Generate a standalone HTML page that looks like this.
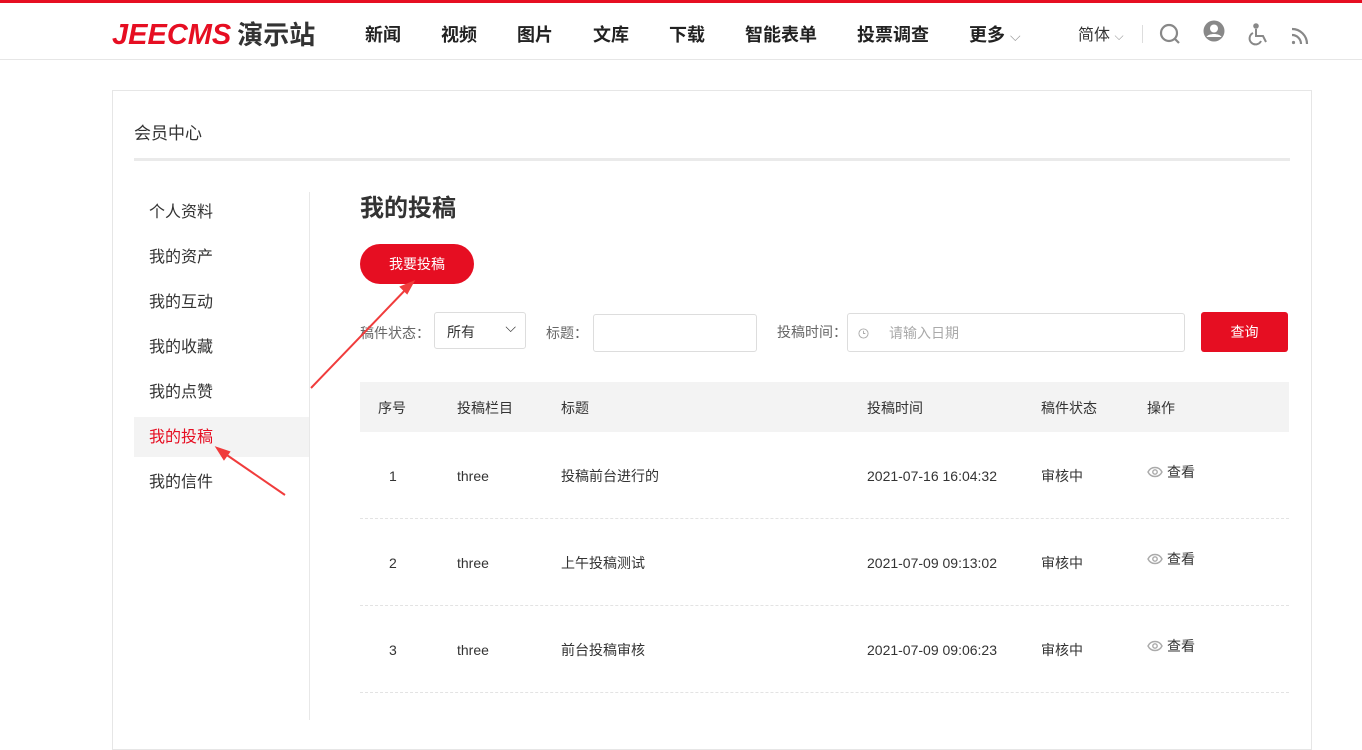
<!DOCTYPE html>
<html><head><meta charset="utf-8"><style>
*{margin:0;padding:0;box-sizing:border-box}
body{width:1362px;height:720px;overflow:hidden;background:#fff;font-family:"Liberation Sans","Noto Sans CJK SC",sans-serif;color:#333;position:relative}
.top{position:absolute;left:0;top:0;width:1362px;height:60px;background:#fff;border-top:3px solid #e60e22;border-bottom:1px solid #e6e6e6}
.logo{position:absolute;left:112px;top:12px;font-size:29px;font-weight:bold;font-style:italic;color:#e60e22;letter-spacing:0px}
.logo span{font-style:normal;color:#333;font-size:26px;margin-left:6px;letter-spacing:0}
.nav{position:absolute;top:18px;font-size:18px;font-weight:bold;color:#222}
.ic{position:absolute;top:19px}
.card{position:absolute;left:112px;top:90px;width:1200px;height:660px;background:#fff;border:1px solid #e6e6e6}
.abs{position:absolute}
.side div{position:absolute;left:0;width:175px;height:40px;line-height:42px;padding-left:15px;font-size:16px;color:#333}
.f{font-size:14px;color:#666}
.box{position:absolute;border:1px solid #ddd;border-radius:3px;background:#fff}
.th{position:absolute;font-size:14px;color:#333}
.td{position:absolute;font-size:14px;color:#333}
.row{position:absolute;left:360px;width:929px;border-bottom:1px dashed #e3e3e3}
.eye{display:inline-block;vertical-align:-2px;margin-right:4px}
</style></head><body>
<div class="top">
<div class="logo">JEECMS<span>演示站</span></div>
<div class="nav" style="left:365px">新闻</div>
<div class="nav" style="left:441px">视频</div>
<div class="nav" style="left:517px">图片</div>
<div class="nav" style="left:593px">文库</div>
<div class="nav" style="left:669px">下载</div>
<div class="nav" style="left:745px">智能表单</div>
<div class="nav" style="left:857px">投票调查</div>
<div class="nav" style="left:969px">更多 <span style="font-weight:normal;color:#999;font-size:14px">⌵</span></div>
<div class="abs" style="left:1078px;top:18px;font-size:16px;color:#333">简体 <span style="color:#999;font-size:12px">⌵</span></div>
<div class="abs" style="left:1142px;top:22px;width:1px;height:18px;background:#ddd"></div>
<svg class="ic" style="left:1158px" width="24" height="24" viewBox="0 0 24 24" fill="none" stroke="#888" stroke-width="2.2"><circle cx="11" cy="11" r="8"/><path d="M17 17l4 4"/></svg>
<svg class="ic" style="left:1203px;top:17px" width="22" height="22" viewBox="0 0 22 22"><circle cx="11" cy="11" r="10.5" fill="#888"/><circle cx="11" cy="8.5" r="4" fill="#fff"/><path d="M3.5 17c2-4 13-4 15 0" fill="#fff"/></svg>
<svg class="ic" style="left:1248px;top:20px" width="22" height="24" viewBox="0 0 22 24" fill="none" stroke="#888" stroke-width="2"><circle cx="8" cy="3" r="1.8" fill="#888"/><path d="M8 6v7h7l3 6"/><path d="M5 10a6 6 0 1 0 8 8"/></svg>
<svg class="ic" style="left:1291px;top:24px" width="18" height="18" viewBox="0 0 18 18" fill="none" stroke="#888" stroke-width="2.2"><path d="M1 8a9 9 0 0 1 9 9M1 2a15 15 0 0 1 15 15"/><circle cx="2.5" cy="15.5" r="1.6" fill="#888" stroke="none"/></svg>
</div>
<div class="card"></div>
<div class="abs" style="left:134px;top:119px;font-size:17px;color:#333">会员中心</div>
<div class="abs" style="left:134px;top:158px;width:1156px;height:3px;background:#eaeaea"></div>
<div class="abs" style="left:309px;top:192px;width:1px;height:528px;background:#e8e8e8"></div>
<div class="side abs" style="left:134px;top:0">
<div style="top:192px">个人资料</div>
<div style="top:237px">我的资产</div>
<div style="top:282px">我的互动</div>
<div style="top:327px">我的收藏</div>
<div style="top:372px">我的点赞</div>
<div style="top:417px;background:#f3f3f3;color:#e60e22">我的投稿</div>
<div style="top:462px">我的信件</div>
</div>
<div class="abs" style="left:360px;top:188px;font-size:24px;font-weight:bold;color:#333">我的投稿</div>
<div class="abs" style="left:360px;top:244px;width:114px;height:40px;border-radius:20px;background:#e60e22;color:#fff;font-size:14px;line-height:40px;text-align:center">我要投稿</div>
<div class="abs f" style="left:360px;top:323px">稿件状态：</div>
<div class="box" style="left:434px;top:312px;width:92px;height:37px"><span style="position:absolute;left:12px;top:9px;font-size:14px;color:#333">所有</span><span style="position:absolute;right:9px;top:6px;font-size:14px;color:#333">⌵</span></div>
<div class="abs f" style="left:546px;top:323px">标题：</div>
<div class="box" style="left:593px;top:314px;width:164px;height:38px"></div>
<div class="abs f" style="left:777px;top:322px">投稿时间：</div>
<div class="box" style="left:847px;top:313px;width:338px;height:39px"><svg style="position:absolute;left:10px;top:14px" width="11" height="11" viewBox="0 0 12 12" fill="none" stroke="#aaa"><circle cx="6" cy="6" r="5"/><path d="M6 3v3h2"/></svg><span style="position:absolute;left:41px;top:9px;font-size:14px;color:#aaa">请输入日期</span></div>
<div class="abs" style="left:1201px;top:312px;width:87px;height:40px;background:#e60e22;border-radius:3px;color:#fff;font-size:14px;line-height:40px;text-align:center">查询</div>
<div class="abs" style="left:360px;top:382px;width:929px;height:50px;background:#f3f3f3"></div>
<div class="th" style="left:378px;top:398px">序号</div>
<div class="th" style="left:457px;top:398px">投稿栏目</div>
<div class="th" style="left:561px;top:398px">标题</div>
<div class="th" style="left:867px;top:398px">投稿时间</div>
<div class="th" style="left:1041px;top:398px">稿件状态</div>
<div class="th" style="left:1147px;top:398px">操作</div>
<div class="row" style="top:432px;height:87px"></div>
<div class="row" style="top:519px;height:87px"></div>
<div class="row" style="top:606px;height:87px"></div>
<div class="td" style="left:389px;top:468px">1</div><div class="td" style="left:457px;top:468px">three</div><div class="td" style="left:561px;top:466px">投稿前台进行的</div><div class="td" style="left:867px;top:468px">2021-07-16 16:04:32</div><div class="td" style="left:1041px;top:466px">审核中</div><div class="td" style="left:1147px;top:462px"><svg class="eye" width="16" height="14" viewBox="0 0 16 14" fill="none" stroke="#aaa" stroke-width="1.4"><path d="M1 7c3-6 11-6 14 0c-3 6-11 6-14 0z"/><circle cx="8" cy="7" r="2.2"/></svg>查看</div>
<div class="td" style="left:389px;top:555px">2</div><div class="td" style="left:457px;top:555px">three</div><div class="td" style="left:561px;top:553px">上午投稿测试</div><div class="td" style="left:867px;top:555px">2021-07-09 09:13:02</div><div class="td" style="left:1041px;top:553px">审核中</div><div class="td" style="left:1147px;top:549px"><svg class="eye" width="16" height="14" viewBox="0 0 16 14" fill="none" stroke="#aaa" stroke-width="1.4"><path d="M1 7c3-6 11-6 14 0c-3 6-11 6-14 0z"/><circle cx="8" cy="7" r="2.2"/></svg>查看</div>
<div class="td" style="left:389px;top:642px">3</div><div class="td" style="left:457px;top:642px">three</div><div class="td" style="left:561px;top:640px">前台投稿审核</div><div class="td" style="left:867px;top:642px">2021-07-09 09:06:23</div><div class="td" style="left:1041px;top:640px">审核中</div><div class="td" style="left:1147px;top:636px"><svg class="eye" width="16" height="14" viewBox="0 0 16 14" fill="none" stroke="#aaa" stroke-width="1.4"><path d="M1 7c3-6 11-6 14 0c-3 6-11 6-14 0z"/><circle cx="8" cy="7" r="2.2"/></svg>查看</div>
<svg class="abs" style="left:0;top:0" width="1362" height="720"><g stroke="#f03c3c" stroke-width="2" fill="#f03c3c"><path d="M311 388L410 285"/><path d="M413 282l-12 5 6 6z"/><path d="M285 495L221 451"/><path d="M217 448l7 11 5-7z"/></g></svg>
</body></html>
